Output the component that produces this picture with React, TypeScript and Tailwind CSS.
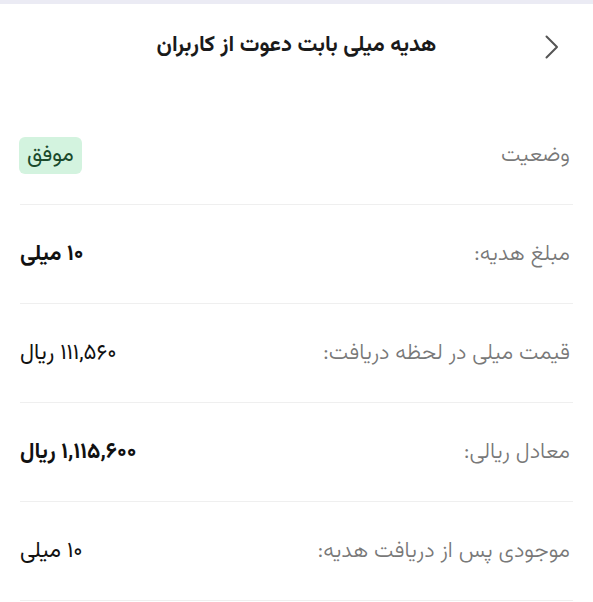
type Row = { label: string; value: string; bold?: boolean; badge?: boolean };

const rows: Row[] = [
  { label: "وضعیت", value: "موفق", badge: true },
  { label: "مبلغ هدیه:", value: "۱۰ میلی", bold: true },
  { label: "قیمت میلی در لحظه دریافت:", value: "۱۱۱,۵۶۰ ریال" },
  { label: "معادل ریالی:", value: "۱,۱۱۵,۶۰۰ ریال", bold: true },
  { label: "موجودی پس از دریافت هدیه:", value: "۱۰ میلی" },
];

export default function App() {
  return (
    <div
      dir="rtl"
      className="min-h-[602px] w-[593px] border-t-4 border-[#ebebf4] bg-white"
      style={{ fontFamily: 'Vazirmatn, "DejaVu Sans", sans-serif' }}
    >
      <header className="relative flex h-[82px] items-center justify-center">
        <button className="absolute right-[34px] top-[31px] text-[#555]">
          <svg width="14" height="24" viewBox="0 0 14 24" fill="none">
            <path d="M1.5 1.5 12 12 1.5 22.5" stroke="currentColor" strokeWidth="2" strokeLinecap="round" strokeLinejoin="round" />
          </svg>
        </button>
        <h1 className="text-[22px] font-bold text-[#1a1a1a]">هدیه میلی بابت دعوت از کاربران</h1>
      </header>

      <div className="mt-[20px] px-[20px]">
        {rows.map((r) => (
          <div
            key={r.label}
            className="flex h-[99px] items-center justify-between border-b border-[#efefef] pr-[3px]"
          >
            <span className="text-[22px] font-light text-[#787878]">{r.label}</span>
            {r.badge ? (
              <span className="-ml-px flex h-[37px] items-center rounded-md bg-[#d3f3df] px-[8px] text-[22px] text-[#1a4a2c]">
                {r.value}
              </span>
            ) : (
              <span className={`text-[22px] text-[#111] ${r.bold ? "font-bold" : ""}`}>{r.value}</span>
            )}
          </div>
        ))}
      </div>
    </div>
  );
}
